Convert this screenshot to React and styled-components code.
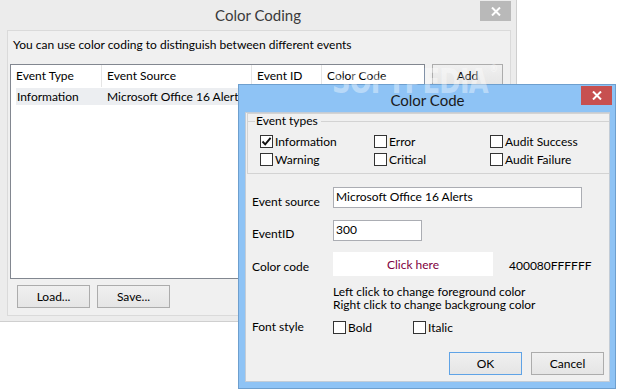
import React from 'react';
import styled, { createGlobalStyle } from 'styled-components';

const GlobalStyle = createGlobalStyle`
  html, body {
    margin: 0;
    padding: 0;
    background: #ffffff;
  }
  body {
    font-family: Lato, "Noto Sans", sans-serif;
    font-size: 12px;
    color: #000;
  }
`;

// --- Desktop & windows ---

const Desktop = styled.div`
  position: relative;
  width: 619px;
  height: 389px;
  overflow: hidden;
  background: #ffffff;
`;

const MainWindow = styled.div`
  width: 517px;
  height: 322px;
  box-sizing: border-box;
  background: #ececec;
  border-right: 1px solid #cfcfcf;
  border-bottom: 1px solid #cfcfcf;
  display: flex;
  flex-direction: column;
`;

const TitleBar = styled.div`
  display: grid;
  grid-template-columns: 1fr auto 1fr;
  align-items: center;
  height: ${p => p.$height}px;
  flex-shrink: 0;
`;

const Title = styled.div`
  grid-column: 2;
  font-size: 15px;
  color: ${p => p.$color};
  padding-top: ${p => p.$offset || 0}px;
`;

const CloseButton = styled.div`
  grid-column: 3;
  justify-self: end;
  align-self: start;
  width: 31px;
  height: ${p => p.$height}px;
  margin-top: 1px;
  margin-right: ${p => p.$right}px;
  background: ${p => p.$bg};
  display: flex;
  align-items: center;
  justify-content: center;
`;

const MainClient = styled.div`
  flex: 1;
  margin: 0 5px 5px 7px;
  border: 1px solid #dadada;
  background: #f0f0f0;
  padding: 6px 6px 7px 2px;
  display: flex;
  flex-direction: column;
`;

const Intro = styled.div`
  line-height: 16px;
  margin: 0 0 11px 3px;
`;

const ListRow = styled.div`
  display: flex;
  gap: 7px;
  align-items: flex-start;
`;

const ListView = styled.div`
  width: 415px;
  height: 215px;
  box-sizing: border-box;
  border: 1px solid #828790;
  background: #fff;
  display: flex;
  flex-direction: column;
`;

const HeaderRow = styled.div`
  display: flex;
  height: 23px;
  line-height: 22px;
`;

const HeaderCell = styled.div`
  width: ${p => p.$w}px;
  flex: ${p => (p.$w ? 'none' : 1)};
  box-sizing: border-box;
  padding-left: 5px;
  border-right: ${p => (p.$w ? '1px solid #e5e5e5' : 'none')};
  height: 22px;
`;

const DataRow = styled.div`
  display: flex;
  margin-left: 5px;
  height: 17px;
  line-height: 17px;
  background: #eceef1;
`;

const DataCell = styled.div`
  width: ${p => p.$w}px;
  box-sizing: border-box;
  padding-left: ${p => p.$pad}px;
  white-space: nowrap;
`;

const Button = styled.div`
  width: ${p => p.$w || 73}px;
  height: 23px;
  box-sizing: border-box;
  border: 1px solid ${p => (p.$default ? '#5fa3e6' : '#acacac')};
  background: linear-gradient(#f0f0f0, #e5e5e5);
  display: flex;
  align-items: center;
  justify-content: center;
  color: #000;
  flex-shrink: 0;
`;

const BottomBar = styled.div`
  display: flex;
  gap: 7px;
  margin-top: 6px;
  padding-left: 7px;
`;

// --- Dialog ---

const Dialog = styled.div`
  position: absolute;
  left: 238px;
  top: 84px;
  width: 378px;
  height: 305px;
  box-sizing: border-box;
  border: 1px solid #6e9fce;
  background: #8ec3f5;
  padding: 0 5px 6px 6px;
  display: flex;
  flex-direction: column;
`;

const DialogClient = styled.div`
  flex: 1;
  border: 1px solid #c3ccd6;
  background: #f0f0f0;
  display: flex;
  flex-direction: column;
`;

const TypesPanel = styled.div`
  margin-left: 1px;
  height: 61px;
  box-sizing: border-box;
  border: 1px solid #d3d3d3;
  border-right: none;
  display: flex;
  flex-direction: column;
`;

const Legend = styled.div`
  display: flex;
  align-items: center;
  height: 14px;
`;

const LegendLine = styled.div`
  height: 1px;
  background: #d3d3d3;
  width: ${p => (p.$w ? `${p.$w}px` : 'auto')};
  flex: ${p => (p.$w ? 'none' : 1)};
`;

const LegendText = styled.span`
  padding: 0 3px 0 1px;
  line-height: 14px;
`;

const TypesGrid = styled.div`
  display: grid;
  grid-template-columns: 114px 116px auto;
  row-gap: 5px;
  margin-top: 7px;
  padding-left: 12px;
`;

const CheckItem = styled.label`
  display: flex;
  align-items: center;
  gap: 2px;
  height: 13px;
  width: ${p => (p.$w ? `${p.$w}px` : 'auto')};
  line-height: 13px;
`;

const Box = styled.span`
  width: 13px;
  height: 13px;
  box-sizing: border-box;
  border: 1px solid #333;
  background: #fff;
  display: flex;
  align-items: center;
  justify-content: center;
  flex-shrink: 0;
`;

const FieldRow = styled.div`
  display: grid;
  grid-template-columns: 81px auto;
  align-items: ${p => (p.$center ? 'center' : 'start')};
  margin-top: ${p => p.$gap}px;
  padding-left: 6px;
`;

const FieldLabel = styled.div`
  line-height: 14px;
  padding-top: ${p => p.$offset || 0}px;
`;

const TextBox = styled.div`
  width: ${p => p.$w}px;
  height: 21px;
  box-sizing: border-box;
  border: 1px solid #abadb3;
  background: #fff;
  padding-left: 2px;
  line-height: 18px;
`;

const ColorRow = styled.div`
  display: flex;
  align-items: center;
`;

const ClickBox = styled.div`
  width: 160px;
  height: 24px;
  background: #fff;
  color: #800040;
  display: flex;
  align-items: center;
  justify-content: center;
`;

const ColorValue = styled.div`
  margin-left: 16px;
  padding-top: 3px;
`;

const Hint = styled.div`
  margin: 9px 0 0 87px;
  line-height: 13px;
`;

const StyleRow = styled.div`
  display: flex;
`;

const ButtonBar = styled.div`
  display: flex;
  justify-content: flex-end;
  gap: 9px;
  margin-top: 18px;
  padding-right: 5px;
`;

const Watermark = styled.div`
  position: absolute;
  left: 332px;
  top: 62px;
  font-family: "DejaVu Sans", sans-serif;
  font-weight: bold;
  font-size: 33px;
  letter-spacing: -1px;
  color: rgba(255, 255, 255, 0.4);
  transform: scaleX(0.78);
  transform-origin: left top;
  pointer-events: none;
  white-space: nowrap;

  sup {
    font-size: 11px;
    vertical-align: top;
    margin-left: 2px;
  }
`;

// --- Parts ---

function CloseGlyph() {
  return (
    <svg width="10" height="9" viewBox="0 0 10 9">
      <path d="M1 0.5 L9 8.5 M9 0.5 L1 8.5" stroke="#fff" strokeWidth="2" fill="none" />
    </svg>
  );
}

function Check({ checked, label, w }) {
  return (
    <CheckItem $w={w}>
      <Box>
        {checked && (
          <svg width="11" height="11" viewBox="0 0 11 11">
            <path d="M1.5 5.5 L4.2 8.3 L9.6 1.8" stroke="#111" strokeWidth="1.9" fill="none" />
          </svg>
        )}
      </Box>
      <span>{label}</span>
    </CheckItem>
  );
}

export default function App() {
  return (
    <Desktop>
      <GlobalStyle />
      <MainWindow>
        <TitleBar $height={30}>
          <Title $color="#3a3a3a">Color Coding</Title>
          <CloseButton $bg="#b9b9b9" $height={20} $right={5}>
            <CloseGlyph />
          </CloseButton>
        </TitleBar>
        <MainClient>
          <Intro>You can use color coding to distinguish between different events</Intro>
          <ListRow>
            <ListView>
              <HeaderRow>
                <HeaderCell $w={91}>Event Type</HeaderCell>
                <HeaderCell $w={150}>Event Source</HeaderCell>
                <HeaderCell $w={70}>Event ID</HeaderCell>
                <HeaderCell>Color Code</HeaderCell>
              </HeaderRow>
              <DataRow>
                <DataCell $w={86} $pad={1}>Information</DataCell>
                <DataCell $w={150} $pad={5}>Microsoft Office 16 Alerts</DataCell>
                <DataCell $w={70} $pad={5}>300</DataCell>
                <DataCell $w={90} $pad={5}></DataCell>
              </DataRow>
            </ListView>
            <Button $w={71}>Add</Button>
          </ListRow>
          <BottomBar>
            <Button>Load...</Button>
            <Button>Save...</Button>
          </BottomBar>
        </MainClient>
      </MainWindow>

      <Dialog>
        <TitleBar $height={27}>
          <Title $color="#1a1a1a" $offset={2}>Color Code</Title>
          <CloseButton $bg="#c75050" $height={19} $right={-2}>
            <CloseGlyph />
          </CloseButton>
        </TitleBar>
        <DialogClient>
          <TypesPanel>
            <Legend>
              <LegendLine $w={7} />
              <LegendText>Event types</LegendText>
              <LegendLine />
            </Legend>
            <TypesGrid>
              <Check checked label="Information" />
              <Check label="Error" />
              <Check label="Audit Success" />
              <Check label="Warning" />
              <Check label="Critical" />
              <Check label="Audit Failure" />
            </TypesGrid>
          </TypesPanel>

          <FieldRow $gap={13}>
            <FieldLabel $offset={8}>Event source</FieldLabel>
            <TextBox $w={249}>Microsoft Office 16 Alerts</TextBox>
          </FieldRow>
          <FieldRow $gap={11}>
            <FieldLabel $offset={7}>EventID</FieldLabel>
            <TextBox $w={89}>300</TextBox>
          </FieldRow>
          <FieldRow $gap={11}>
            <FieldLabel $offset={8}>Color code</FieldLabel>
            <ColorRow>
              <ClickBox>Click here</ClickBox>
              <ColorValue>400080FFFFFF</ColorValue>
            </ColorRow>
          </FieldRow>
          <Hint>
            Left click to change foreground color
            <br />
            Right click to change backgroung color
          </Hint>
          <FieldRow $gap={9} $center>
            <FieldLabel>Font style</FieldLabel>
            <StyleRow>
              <Check label="Bold" w={80} />
              <Check label="Italic" />
            </StyleRow>
          </FieldRow>
          <ButtonBar>
            <Button $default>OK</Button>
            <Button>Cancel</Button>
          </ButtonBar>
        </DialogClient>
      </Dialog>

      <Watermark>
        SOFTPEDIA<sup>®</sup>
      </Watermark>
    </Desktop>
  );
}
